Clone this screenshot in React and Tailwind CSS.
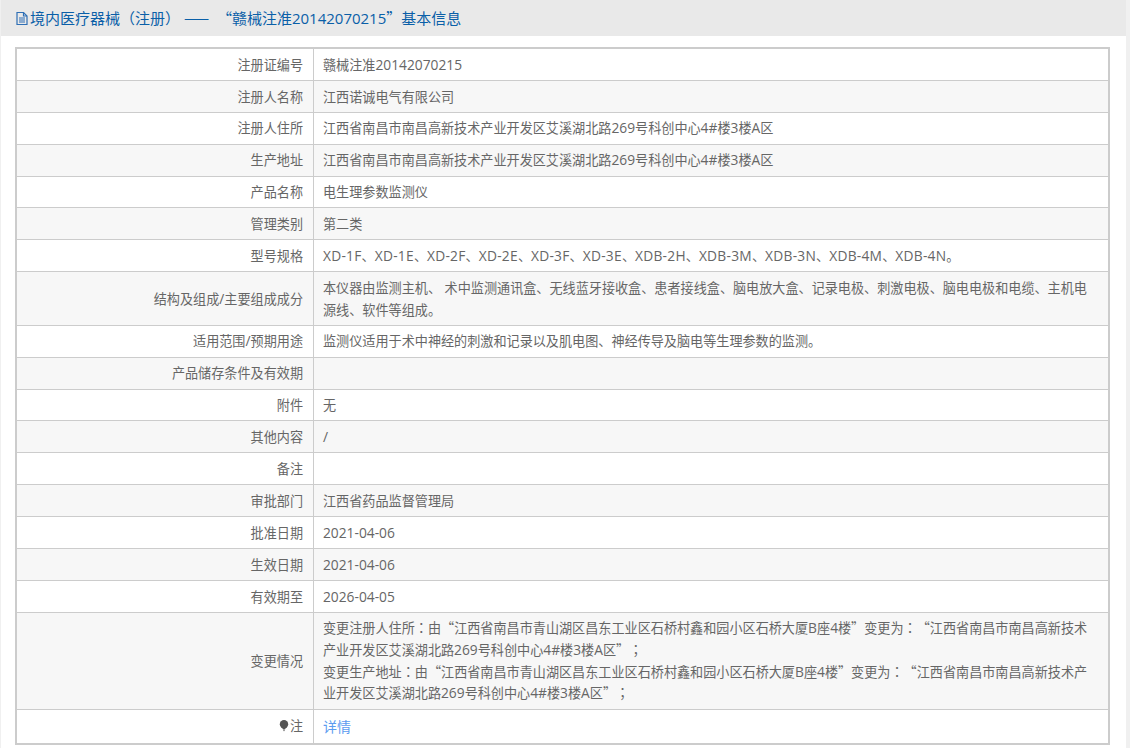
const rows = [
  ['注册证编号', '赣械注准20142070215'],
  ['注册人名称', '江西诺诚电气有限公司'],
  ['注册人住所', '江西省南昌市南昌高新技术产业开发区艾溪湖北路269号科创中心4#楼3楼A区'],
  ['生产地址', '江西省南昌市南昌高新技术产业开发区艾溪湖北路269号科创中心4#楼3楼A区'],
  ['产品名称', '电生理参数监测仪'],
  ['管理类别', '第二类'],
  ['型号规格', 'XD-1F、XD-1E、XD-2F、XD-2E、XD-3F、XD-3E、XDB-2H、XDB-3M、XDB-3N、XDB-4M、XDB-4N。'],
  ['结构及组成/主要组成成分', '本仪器由监测主机、 术中监测通讯盒、无线蓝牙接收盒、患者接线盒、脑电放大盒、记录电极、刺激电极、脑电电极和电缆、主机电源线、软件等组成。'],
  ['适用范围/预期用途', '监测仪适用于术中神经的刺激和记录以及肌电图、神经传导及脑电等生理参数的监测。'],
  ['产品储存条件及有效期', ''],
  ['附件', '无'],
  ['其他内容', '/'],
  ['备注', ''],
  ['审批部门', '江西省药品监督管理局'],
  ['批准日期', '2021-04-06'],
  ['生效日期', '2021-04-06'],
  ['有效期至', '2026-04-05'],
  ['变更情况', '变更注册人住所：由“江西省南昌市青山湖区昌东工业区石桥村鑫和园小区石桥大厦B座4楼”变更为：“江西省南昌市南昌高新技术产业开发区艾溪湖北路269号科创中心4#楼3楼A区”；\n变更生产地址：由“江西省南昌市青山湖区昌东工业区石桥村鑫和园小区石桥大厦B座4楼”变更为：“江西省南昌市南昌高新技术产业开发区艾溪湖北路269号科创中心4#楼3楼A区”；'],
]

// latin runs and the centred full-width colons need their own font
const Mixed = ({ text, latin = 'text-[1.05em]' }) =>
  text.split(/([\x20-\x7e]+|[：；（）])/).map((part, i) => {
    if (/^[\x20-\x7e]+$/.test(part)) {
      // model numbers run wider in the original font
      const extra = /^[A-Z]+-/.test(part) ? 'tracking-[0.25px]' : ''
      return <span key={i} className={`font-['Open_Sans'] leading-none whitespace-pre-wrap ${latin} ${extra}`}>{part}</span>
    }
    if (/^[：；（）]$/.test(part)) {
      return <span key={i} className="font-['Noto_Sans_CJK_TC'] leading-none">{part}</span>
    }
    return part
  })

const DocIcon = () => (
  <svg width="14" height="15" viewBox="0 0 14 15" fill="none" stroke="#2f6fb5" strokeWidth="1.2" className="shrink-0">
    <path d="M2 1.5h6.5l3.5 3.5v8.5H2z" />
    <path d="M8.5 1.5V5H12" />
    <path d="M4 7h6M4 9h6M4 11h6" />
  </svg>
)

const BulbIcon = () => (
  <svg width="10" height="13" viewBox="0 0 10 13" className="mr-px inline-block align-[-1px]">
    <circle cx="5" cy="5.2" r="4.2" fill="#555" />
    <path d="M3.4 9h3.2L6 10.4H4z" fill="#555" />
    <path d="M4 11.6h2" stroke="#999" strokeWidth="1" />
  </svg>
)

const cellClass = 'border border-[#ccc] py-[4.62px] px-[9.5px] align-middle'

export default function App() {
  return (
    <div className="w-[1130px] h-[748px] overflow-hidden bg-[#f0f0f0] pl-px pr-[4px] font-['Noto_Sans_CJK_SC','Liberation_Sans',sans-serif] text-[13.12px] leading-[21.67px] text-[#666] [text-spacing-trim:space-all]">
      <div className="h-full bg-white">
        <div className="flex h-9 items-center gap-px bg-[#e9e9e9] pl-[14px] text-[15px] text-[#0a5fa8]">
          <DocIcon />
          <span><Mixed latin="text-[1em]" text="境内医疗器械（注册） ——  “赣械注准20142070215”基本信息" /></span>
        </div>
        <div className="pt-[11px] pl-[14px] pr-[16px]">
          <table className="w-full table-fixed border-collapse border-2 border-[#ccc]">
            <colgroup>
              <col className="w-[297px]" />
              <col />
            </colgroup>
            <tbody>
              {rows.map(([label, value], i) => (
                <tr key={label} className={i % 2 === 1 ? 'bg-[#f7f7f7]' : 'bg-white'}>
                  <td className={`${cellClass} text-right`}><Mixed text={label} /></td>
                  <td className={cellClass}>
                    {value.split('\n').map((line) => (
                      <div key={line}><Mixed text={line} /></div>
                    ))}
                  </td>
                </tr>
              ))}
              <tr className="bg-white">
                <td className={`${cellClass} text-right`}>
                  <BulbIcon />注
                </td>
                <td className={`${cellClass} pt-[6.5px] text-[14px] text-[#5c9cf0]`}>详情</td>
              </tr>
            </tbody>
          </table>
        </div>
      </div>
    </div>
  )
}
